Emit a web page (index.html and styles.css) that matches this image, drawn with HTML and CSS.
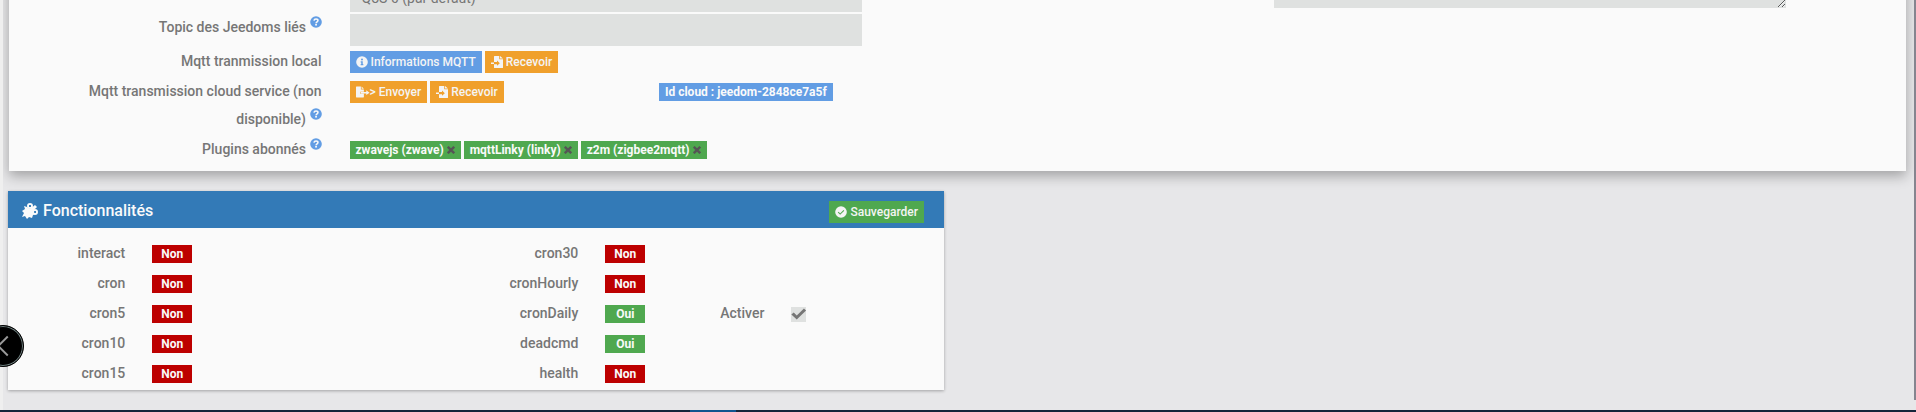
FILE: index.html
```
<!DOCTYPE html>
<html lang="fr">

<head>
    <meta charset="utf-8">
    <title>Configuration plugin</title>
    <link rel="stylesheet" href="styles.css">
</head>

<body>
    <!-- icons -->
    <svg class="sprite" aria-hidden="true">
        <symbol id="help" viewBox="0 0 512 512">
            <path fill="currentColor" d="M504 256A248 248 0 1 1 8 256a248 248 0 0 1 496 0z" />
            <path fill="none" stroke="#fafafa" stroke-width="66" d="M168 198c8-48 42-72 88-72 50 0 84 28 84 66 0 60-80 54-80 116" />
            <circle cx="258" cy="372" r="42" fill="#fafafa" />
        </symbol>
        <symbol id="info" viewBox="0 0 512 512">
            <path fill="currentColor" d="M504 256A248 248 0 1 1 8 256a248 248 0 0 1 496 0z" />
            <path fill="#629de4" d="M256 110a42 42 0 1 1 0 84 42 42 0 0 1 0-84zM200 224h88v122h24v48H200v-48h24v-74h-24z" />
        </symbol>
        <symbol id="check" viewBox="0 0 512 512">
            <path fill="currentColor" d="M504 256A248 248 0 1 1 8 256a248 248 0 0 1 496 0z" />
            <path fill="none" stroke="#4fa84f" stroke-width="46" d="M136 262l84 84 160-160" />
        </symbol>
        <symbol id="export" viewBox="0 0 640 512">
            <path fill="currentColor" d="M24 0h200v136h136v104H192v96h168v152c0 13-11 24-24 24H24c-13 0-24-11-24-24V24C0 11 11 0 24 0zM256 0l104 104H256zM470 180l150 108-150 108v-76H216v-64h254z" />
        </symbol>
        <symbol id="import" viewBox="0 0 512 512">
            <path fill="currentColor" d="M152 0h200v136h160v352c0 13-11 24-24 24H152c-13 0-24-11-24-24V352h128v66l120-114-120-114v66H128V24c0-13 11-24 24-24zM384 0l128 104H384zM0 272h128v64H0z" />
        </symbol>
        <symbol id="times" viewBox="0 0 10 10">
            <path fill="none" stroke="currentColor" stroke-width="3" d="M1 1l8 8M9 1l-8 8" />
        </symbol>
        <symbol id="puzzle" viewBox="0 0 16 16">
            <path fill="currentColor" d="M0 8l3-2-1-3 3 1 3 2 5-4 2 2-3 3 1 4-2 1-1 3-3-1-2 2-2-3-3 1 2-4z" />
            <circle cx="8" cy="3" r="2" fill="none" stroke="currentColor" stroke-width="2" />
            <circle cx="13" cy="9" r="2" fill="none" stroke="currentColor" stroke-width="2" />
            <circle cx="8" cy="3" r="1" fill="#337ab7" />
            <circle cx="13" cy="9" r="1" fill="#337ab7" />
        </symbol>
    </svg>

    <main class="content">
        <form class="panel config">
            <div class="config-col">
                <div class="form-row">
                    <span></span>
                    <select class="form-control" aria-label="QoS">
                        <option>QoS 0 (par défaut)</option>
                    </select>
                </div>
                <div class="form-row">
                    <label for="topic">Topic des Jeedoms liés <svg class="help"><use href="#help" /></svg></label>
                    <input type="text" id="topic" class="form-control">
                </div>
                <div class="form-row">
                    <span class="name">Mqtt tranmission local</span>
                    <div class="buttons">
                        <button type="button" class="btn btn-info"><svg class="icon"><use href="#info" /></svg>Informations MQTT</button>
                        <button type="button" class="btn btn-warning"><svg class="icon"><use href="#import" /></svg>Recevoir</button>
                    </div>
                </div>
                <div class="form-row">
                    <span class="name">Mqtt transmission cloud service (non disponible) <svg class="help"><use href="#help" /></svg></span>
                    <div class="cloud">
                        <div class="buttons">
                            <button type="button" class="btn btn-warning btn-send"><svg class="icon"><use href="#export" /></svg>&gt; Envoyer</button>
                            <button type="button" class="btn btn-warning"><svg class="icon"><use href="#import" /></svg>Recevoir</button>
                        </div>
                        <div class="tags"><span class="tag tag-info">Id cloud : jeedom-2848ce7a5f</span></div>
                    </div>
                </div>
                <div class="form-row">
                    <span class="name">Plugins abonnés <svg class="help"><use href="#help" /></svg></span>
                    <div class="tags">
                        <span class="tag tag-success">zwavejs (zwave)<button type="button" class="remove" aria-label="Supprimer"><svg><use href="#times" /></svg></button></span>
                        <span class="tag tag-success">mqttLinky (linky)<button type="button" class="remove" aria-label="Supprimer"><svg><use href="#times" /></svg></button></span>
                        <span class="tag tag-success">z2m (zigbee2mqtt)<button type="button" class="remove" aria-label="Supprimer"><svg><use href="#times" /></svg></button></span>
                    </div>
                </div>
            </div>
            <div class="config-col">
                <div class="form-row">
                    <span></span>
                    <textarea class="form-control" aria-label="Paramètres"></textarea>
                </div>
            </div>
        </form>

        <section class="panel features">
            <header class="panel-heading">
                <h3><svg class="puzzle"><use href="#puzzle" /></svg>Fonctionnalités</h3>
                <button type="button" class="btn btn-success"><svg class="icon"><use href="#check" /></svg>Sauvegarder</button>
            </header>
            <div class="panel-body">
                <div class="feature"><span class="name">interact</span><span class="state no">Non</span></div>
                <div class="feature"><span class="name">cron30</span><span class="state no">Non</span></div>
                <div class="feature"><span class="name">cron</span><span class="state no">Non</span></div>
                <div class="feature"><span class="name">cronHourly</span><span class="state no">Non</span></div>
                <div class="feature"><span class="name">cron5</span><span class="state no">Non</span></div>
                <div class="feature">
                    <span class="name">cronDaily</span><span class="state yes">Oui</span>
                    <label for="cronDaily">Activer</label><input type="checkbox" id="cronDaily" checked>
                </div>
                <div class="feature"><span class="name">cron10</span><span class="state no">Non</span></div>
                <div class="feature"><span class="name">deadcmd</span><span class="state yes">Oui</span></div>
                <div class="feature"><span class="name">cron15</span><span class="state no">Non</span></div>
                <div class="feature"><span class="name">health</span><span class="state no">Non</span></div>
            </div>
        </section>
    </main>

    <footer class="taskbar"><span class="active-task"></span></footer>

    <!-- over the page -->
    <div class="left-bar"></div>
    <button type="button" class="back" aria-label="Retour">
        <svg viewBox="0 0 42 42"><path d="M26 11L16 21l10 10" /></svg>
    </button>
    <div class="scrollbar"></div>
</body>

</html>
```

FILE: styles.css
```
* {
    box-sizing: border-box;
}

body {
    display: flex;
    flex-direction: column;
    height: 100vh;
    margin: 0;
    overflow: hidden;
    background-color: #e7e7e9;
    color: #767676;
    font-family: Roboto, sans-serif;
    font-size: 14px;
}

.sprite {
    display: none;
}

/* page is scrolled down to its end */
.content {
    flex: 1;
    min-height: 0;
    display: flex;
    flex-direction: column;
    justify-content: flex-end;
    gap: 20px;
    padding: 0 10px 20px 8px;
    overflow: hidden;
}

.panel {
    flex-shrink: 0;
    background-color: #fafafa;
}

.config {
    display: grid;
    grid-template-columns: 1fr 1fr;
    margin-left: 1px;
    padding: 20px 25px 6px 23px;
    box-shadow: 0 5px 12px rgba(0, 0, 0, 0.3);
}

.form-row {
    display: grid;
    grid-template-columns: 13fr 23fr 3fr;
    column-gap: 28px;
    align-items: start;
    min-height: 30px;
}

.name,
label {
    padding-bottom: 2px;
    font-weight: 500;
    line-height: 28px;
    text-align: right;
}

.help {
    width: 12px;
    height: 12px;
    color: #629de4;
    vertical-align: 4px;
}

.form-control {
    appearance: none;
    width: 100%;
    height: 32px;
    margin: 1px 0;
    padding: 8px 12px 4px;
    border: none;
    border-radius: 0;
    background-color: #dfe1e0;
    color: #767676;
    font: 14px Roboto, sans-serif;
}

textarea.form-control {
    height: 28px;
}

.buttons {
    display: flex;
    gap: 3px;
    padding-top: 4px;
}

.btn {
    display: flex;
    align-items: center;
    gap: 3px;
    height: 22px;
    padding: 0 6px;
    border: none;
    color: #f4f4f4;
    font: 500 12px Roboto, sans-serif;
    white-space: nowrap;
}

.icon {
    width: 12px;
    height: 12px;
}

.btn-send {
    gap: 0;
}

.btn-send .icon {
    width: 14px;
}

.btn-info,
.tag-info {
    background-color: #629de4;
}

.btn-warning {
    background-color: #f0a02c;
}

.btn-success,
.tag-success,
.yes {
    background-color: #4fa84f;
}

.no {
    background-color: #bd0000;
}

.cloud {
    display: grid;
    grid-template-columns: 29fr 19fr;
}

.tags {
    display: flex;
    gap: 3px;
    padding-top: 6px;
}

.tag,
.state {
    height: 18px;
    color: #fafafa;
    font-size: 12px;
    font-weight: 700;
    line-height: 18px;
    white-space: nowrap;
}

.tag {
    display: flex;
    align-items: center;
    gap: 3px;
    padding: 0 6px;
}

.remove {
    display: flex;
    padding: 0;
    border: none;
    background: none;
    color: #555555;
}

.remove svg {
    width: 8px;
    height: 8px;
}

.features {
    width: calc(50% - 13px);
    box-shadow: 0 1px 3px rgba(0, 0, 0, 0.3);
}

.panel-heading {
    display: flex;
    justify-content: space-between;
    height: 37px;
    padding: 0 20px 0 14px;
    background-color: #337ab7;
}

.panel-heading h3 {
    display: flex;
    align-items: center;
    gap: 5px;
    margin: 0;
    padding-top: 2px;
    color: #fafafa;
    font-size: 16px;
    font-weight: 500;
}

.panel-heading .btn {
    margin-top: 10px;
}

.puzzle {
    width: 16px;
    height: 16px;
}

.panel-body {
    display: grid;
    grid-template-columns: 1fr 1fr;
    padding: 11px 15px 1px;
}

.feature {
    display: grid;
    grid-template-columns: 55fr 37fr 34fr 74fr;
    column-gap: 27px;
    align-items: start;
}

.state {
    width: 40px;
    margin-top: 6px;
    text-align: center;
}

input[type="checkbox"] {
    appearance: none;
    display: grid;
    width: 15px;
    height: 15px;
    margin: 8px 0 0;
    background-color: #dfe1e0;
}

input[type="checkbox"]:checked::before {
    content: "";
    background-color: #767676;
    clip-path: polygon(0 50%, 16% 36%, 36% 56%, 84% 10%, 98% 24%, 36% 84%);
}

.taskbar {
    display: flex;
    justify-content: center;
    height: 2px;
    padding-right: 490px;
    background-color: #14263b;
}

.active-task {
    width: 46px;
    background-color: #0f548f;
}

.left-bar {
    position: fixed;
    top: 0;
    bottom: 2px;
    left: 0;
    width: 3px;
    background-color: #efefef;
}

.back {
    position: fixed;
    bottom: 45px;
    left: -18px;
    width: 42px;
    height: 42px;
    padding: 0;
    border: 1px solid #000000;
    border-radius: 50%;
    background-color: #000000;
    box-shadow: inset 0 0 0 1px #6f8080;
}

.back path {
    fill: none;
    stroke: #9a9a9a;
    stroke-width: 2;
}

.scrollbar {
    position: fixed;
    top: 0;
    right: 0;
    bottom: 12px;
    width: 2px;
    background-color: #85858f;
}
```
